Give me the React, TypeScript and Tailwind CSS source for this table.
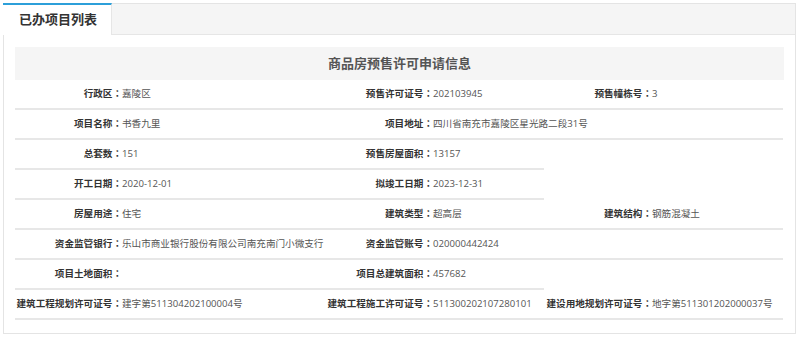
import React from "react";

type Cell = {
  label?: string;
  value?: string;
  span?: number;
  empty?: number;
  noBorder?: boolean;
};

const rows: Cell[][] = [
  [
    { label: "行政区", value: "嘉陵区" },
    { label: "预售许可证号", value: "202103945" },
    { label: "预售幢栋号", value: "3" },
  ],
  [
    { label: "项目名称", value: "书香九里" },
    { label: "项目地址", value: "四川省南充市嘉陵区星光路二段31号", span: 3 },
  ],
  [
    { label: "总套数", value: "151" },
    { label: "预售房屋面积", value: "13157" },
    { empty: 2, noBorder: true },
  ],
  [
    { label: "开工日期", value: "2020-12-01" },
    { label: "拟竣工日期", value: "2023-12-31" },
    { empty: 2, noBorder: true },
  ],
  [
    { label: "房屋用途", value: "住宅" },
    { label: "建筑类型", value: "超高层" },
    { label: "建筑结构", value: "钢筋混凝土" },
  ],
  [
    { label: "资金监管银行", value: "乐山市商业银行股份有限公司南充南门小微支行" },
    { label: "资金监管账号", value: "020000442424" },
    { empty: 2 },
  ],
  [
    { label: "项目土地面积", value: "" },
    { label: "项目总建筑面积", value: "457682" },
    { empty: 2, noBorder: true },
  ],
  [
    { label: "建筑工程规划许可证号", value: "建字第511304202100004号" },
    { label: "建筑工程施工许可证号", value: "511300202107280101" },
    { label: "建设用地规划许可证号", value: "地字第511301202000037号" },
  ],
];

const font = { fontFamily: '"Open Sans","Noto Sans CJK SC",sans-serif' };
const colonFont = { fontFamily: '"Noto Sans CJK TC",sans-serif' };

export default function App() {
  return (
    <div className="w-[800px] h-[339px] bg-white" style={font}>
      <div className="ml-[3px] mt-[3px] w-[793px] h-[331px] border border-[#e4e4e4] bg-white">
        <div className="flex h-[31px] bg-[#f5f5f5] border-b border-[#e6e6e6]">
          <div className="-mt-px -ml-px w-[109px] h-[32px] bg-white border-t-2 border-t-[#2c9fd9] border-r border-r-[#e6e6e6] flex items-center pl-[16px] text-[13px] font-bold text-[#333]">
            已办项目列表
          </div>
        </div>
        <div className="px-[11px] pt-[12px]">
          <div className="h-[33px] bg-[#f5f5f5] flex items-center justify-center text-[13px] font-bold text-[#555]">
            商品房预售许可申请信息
          </div>
          <div className="grid grid-cols-[107px_203px_108px_111px_108px_131px] text-[9.6px] leading-none">
            {rows.map((row, ri) =>
              row.map((c, ci) => {
                if (c.empty) {
                  return (
                    <div
                      key={`${ri}-${ci}`}
                      className={`col-span-2 h-[30px] ${c.noBorder ? "" : "border-b-2 border-[#e7e7e7]"}`}
                    />
                  );
                }
                return (
                  <React.Fragment key={`${ri}-${ci}`}>
                    <div className="h-[30px] border-b-2 border-[#e7e7e7] flex items-center justify-end font-bold text-[#333] whitespace-nowrap">
                      {c.label}
                      <span style={colonFont}>：</span>
                    </div>
                    <div
                      className={`h-[30px] border-b-2 border-[#e7e7e7] flex items-center text-[#555] whitespace-nowrap ${
                        c.span === 3 ? "col-span-3" : ""
                      }`}
                    >
                      {c.value}
                    </div>
                  </React.Fragment>
                );
              })
            )}
          </div>
        </div>
      </div>
    </div>
  );
}
